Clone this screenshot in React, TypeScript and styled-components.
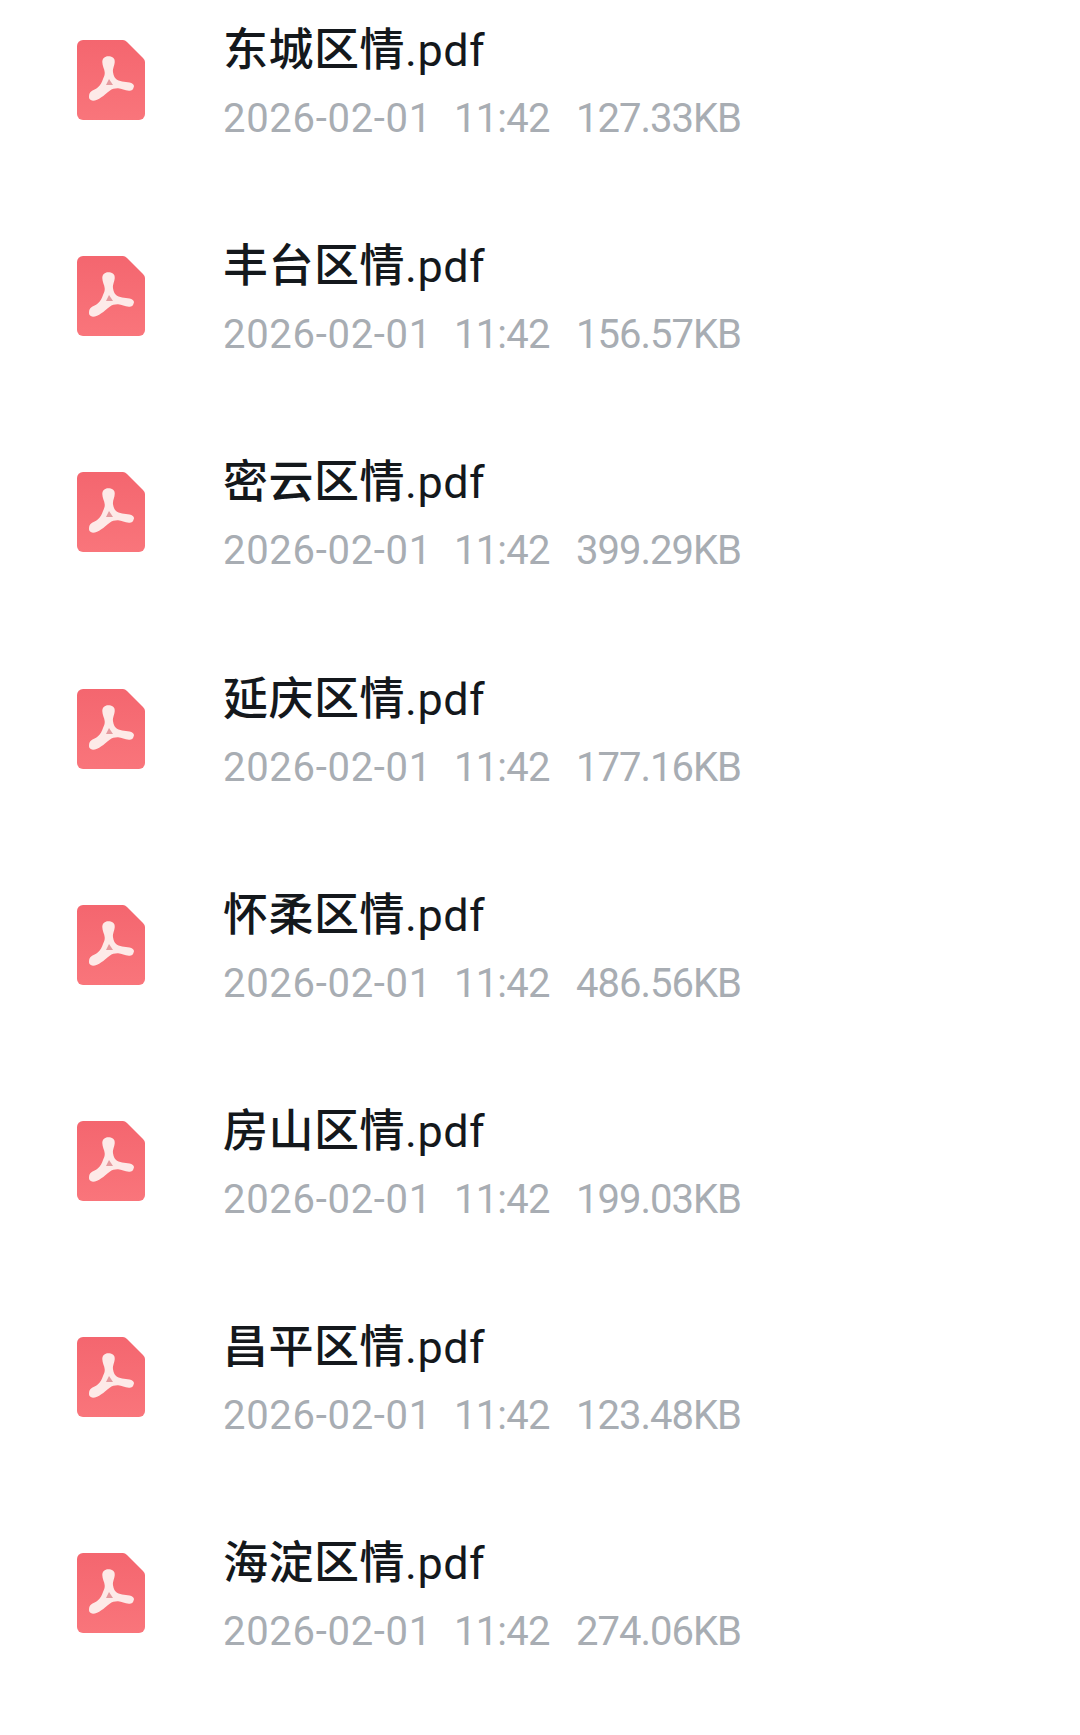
import React from "react";
import styled, { createGlobalStyle } from "styled-components";

const Global = createGlobalStyle`
  html, body { margin: 0; padding: 0; background: #fff; }
  body { font-family: "Noto Sans CJK SC", "Noto Sans", sans-serif; }
`;

const List = styled.div`
  width: 1080px;
  height: 1735px;
  overflow: hidden;
  padding-top: 10px;
  box-sizing: border-box;
  display: flex;
  flex-direction: column;
`;

const Row = styled.div`
  height: 216.2px;
  flex: none;
  display: flex;
  align-items: flex-start;
  padding-left: 77px;
`;

const IconBox = styled.div`
  width: 70px;
  height: 82px;
  margin-top: 29px;
  flex: none;
  filter: blur(0.6px);
`;

const Text = styled.div`
  margin-left: 76px;
  padding-top: 7px;
  display: flex;
  flex-direction: column;
`;

const Title = styled.div`
  font-family: "Noto Sans CJK SC", sans-serif;
  font-size: 45px;
  font-weight: 500;
  line-height: 60px;
  height: 60px;
  color: #14181c;
  letter-spacing: 0.5px;
  span { font-family: Roboto, sans-serif; font-weight: 400; letter-spacing: 0.5px; }
`;

const Meta = styled.div`
  font-family: Roboto, sans-serif;
  font-size: 40px;
  line-height: 50px;
  margin-top: 17px;
  color: #a8adb3;
  display: flex;
  white-space: pre;
`;

const DateText = styled.span`
  width: 231px;
  letter-spacing: 0.7px;
`;
const TimeText = styled.span`
  width: 122px;
  letter-spacing: -0.8px;
`;
const SizeText = styled.span`
  letter-spacing: -1px;
`;

const PdfIcon = () => (
  <svg width="70" height="82" viewBox="0 0 70 82">
    <defs>
      <linearGradient id="g" x1="0" y1="0" x2="0" y2="1">
        <stop offset="0" stopColor="#f4666f" />
        <stop offset="1" stopColor="#f9757b" />
      </linearGradient>
    </defs>
    <path d="M6 1H46Q48 1 50 3L66 19Q68 21 68 23V75a6 6 0 0 1-6 6H6a6 6 0 0 1-6-6V7a6 6 0 0 1 6-6Z" fill="url(#g)" />
    <path
      d="M31 17.3C35 17.3 37.7 19 37.7 22C38 26 35.5 29 36 33.3C36.5 37 38 39.5 40 40.7C44 43 50 42.5 54.3 44C56.7 45 57.5 47 56.7 48.3C56 51 54.5 51.7 52.7 51.7C48 52 45 49.5 41 49.3C38 49.2 35 50 32.7 51.7C29.5 54 27 56.5 24.3 58.3C21.5 60.5 18.5 61.7 16 61.7C13.5 61.7 12 60 12 58.3C12 56 12.3 54.5 13.3 53.3C15.5 51 18.5 50.5 21 48.3C23.5 46 25 43 26 40C27 37.5 28 36 27.7 33.3C27.5 30 25.3 27 25.3 23C25.3 19.5 28 17.3 31 17.3Z"
      fill="#fdeae8"
    />
    <path d="M32 40L36 46H29Z" fill="#e59a9e" />
  </svg>
);

const files = [
  ["东城", "127.33KB"],
  ["丰台", "156.57KB"],
  ["密云", "399.29KB"],
  ["延庆", "177.16KB"],
  ["怀柔", "486.56KB"],
  ["房山", "199.03KB"],
  ["昌平", "123.48KB"],
  ["海淀", "274.06KB"],
];

export default function App() {
  return (
    <>
      <Global />
      <List>
        {files.map(([name, size]) => (
          <Row key={name}>
            <IconBox>
              <PdfIcon />
            </IconBox>
            <Text>
              <Title>
                {name}区情<span>.pdf</span>
              </Title>
              <Meta>
                <DateText>2026-02-01</DateText>
                <TimeText>11:42</TimeText>
                <SizeText>{size}</SizeText>
              </Meta>
            </Text>
          </Row>
        ))}
      </List>
    </>
  );
}
